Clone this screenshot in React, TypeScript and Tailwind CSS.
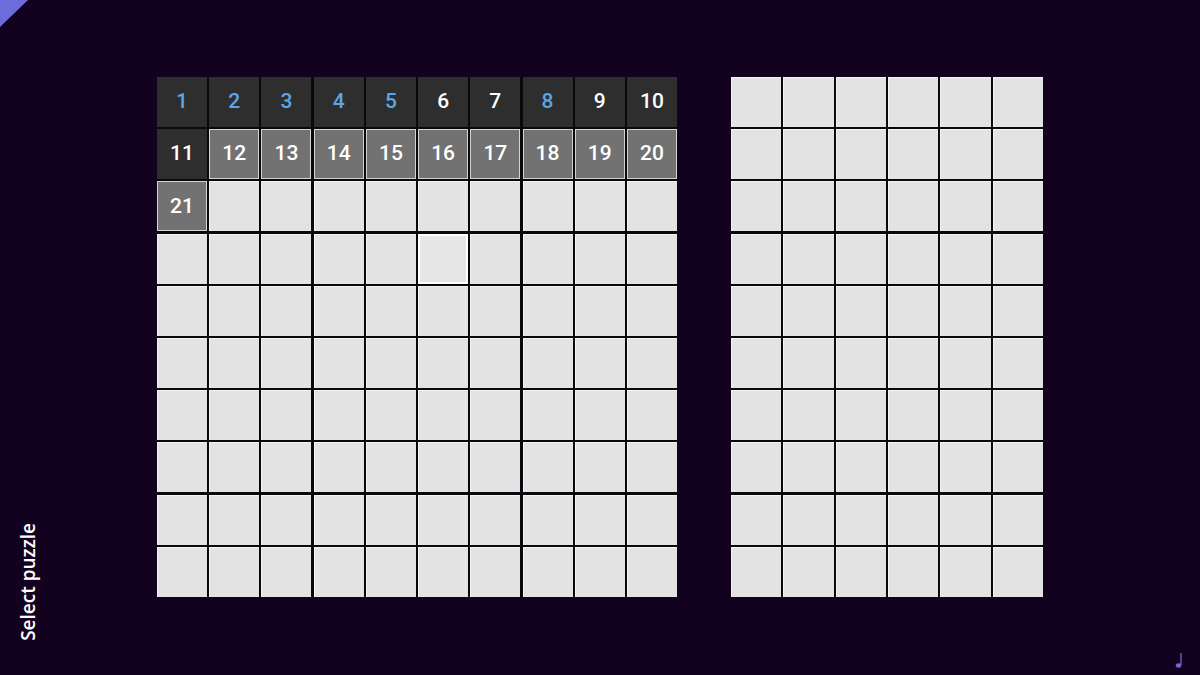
import React from "react";

const blue = new Set([1, 2, 3, 4, 5, 8]);

function Cell({ i }: { i: number }) {
  const n = i + 1;
  if (n <= 11) {
    return (
      <div
        className={`h-[50px] flex items-center justify-center bg-[#2e2e2e] text-[21px] font-medium ${
          blue.has(n) ? "text-[#5ba6e8]" : "text-white"
        }`}
      >
        {n}
      </div>
    );
  }
  if (n <= 21) {
    return (
      <div className="h-[50px] flex items-center justify-center bg-[#727272] border border-[#d4d4d4] text-white text-[21px] font-medium">
        {n}
      </div>
    );
  }
  if (n === 36) {
    return <div className="h-[50px] bg-[#e6e6e6] border-2 border-white" />;
  }
  return (
    <div className="h-[50px] bg-[#e3e3e3] border-t border-l border-[#f4f4f4]" />
  );
}

export default function App() {
  return (
    <div
      className="relative w-[1200px] h-[675px] overflow-hidden bg-[#12011f]"
      style={{ fontFamily: "Roboto, 'Open Sans', sans-serif" }}
    >
      <svg className="absolute left-0 top-0" width="30" height="30" viewBox="0 0 30 30">
        <polygon points="0,0 28,0 0,27" fill="#6c6ddb" />
      </svg>

      <div className="flex pt-[77px] pl-[157px] gap-[54px]">
        <div className="grid grid-cols-10 gap-[2.2px] w-[520px] bg-[#0a080c]">
          {Array.from({ length: 100 }, (_, i) => (
            <Cell key={i} i={i} />
          ))}
        </div>
        <div className="grid grid-cols-6 gap-[2.2px] w-[312px] bg-[#0a080c]">
          {Array.from({ length: 60 }, (_, i) => (
            <div key={i} className="h-[50px] bg-[#e3e3e3] border-t border-l border-[#f4f4f4]" />
          ))}
        </div>
      </div>

      <div
        className="absolute left-[14px] bottom-[34px] text-white text-[19px] font-semibold [writing-mode:vertical-rl] rotate-180"
        style={{ fontFamily: "'Open Sans', sans-serif" }}
      >
        Select puzzle
      </div>

      <svg className="absolute left-[1172px] top-[651px]" width="14" height="18" viewBox="0 0 14 18">
        <line x1="9" y1="2" x2="9" y2="14" stroke="#7466d4" strokeWidth="1.3" />
        <ellipse cx="6.5" cy="14.5" rx="2.7" ry="2.2" fill="#7466d4" />
      </svg>
    </div>
  );
}
